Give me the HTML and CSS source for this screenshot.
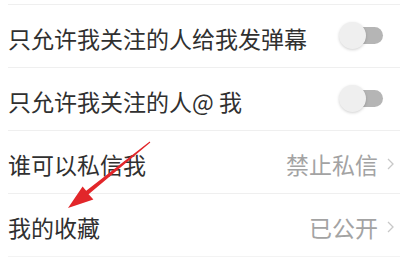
FILE: index.html
```html
<!DOCTYPE html>
<html lang="zh-CN">
<head>
<meta charset="utf-8">
<link rel="stylesheet" href="styles.css">
</head>
<body>
<div class="list">
  <div class="row">
    <span class="label">只允许我关注的人给我发弹幕</span>
    <div class="switch"><div class="knob"></div></div>
  </div>
  <div class="row">
    <span class="label">只允许我关注的人@ 我</span>
    <div class="switch"><div class="knob"></div></div>
  </div>
  <div class="row link">
    <span class="label">谁可以私信我</span>
    <span class="value">禁止私信</span>
    <svg class="chev" width="7" height="12" viewBox="0 0 7 12"><path d="M1 1 L6 6 L1 11" fill="none" stroke="#c8c8c8" stroke-width="1.3"/></svg>
  </div>
  <div class="row link">
    <span class="label">我的收藏</span>
    <span class="value">已公开</span>
    <svg class="chev" width="7" height="12" viewBox="0 0 7 12"><path d="M1 1 L6 6 L1 11" fill="none" stroke="#c8c8c8" stroke-width="1.3"/></svg>
  </div>
</div>
<svg class="arrow" width="400" height="259" viewBox="0 0 400 259">
  <polygon points="149.7,141.6 86.2,190.8 82.6,186.5 68,208 93.4,199.5 88.6,194.2 150.3,142.4" fill="#e2262a"/>
</svg>
</body>
</html>
```
FILE: styles.css
```css
html, body {
  margin: 0;
  padding: 0;
  background: #ffffff;
}
body {
  width: 400px;
  height: 259px;
  overflow: hidden;
  position: relative;
  font-family: "Noto Sans CJK SC", "Noto Sans", sans-serif;
}
.list {
  padding-top: 4px;
}
.row {
  display: flex;
  align-items: center;
  height: 58px;
  padding-top: 4px;
  margin-left: 8px;
  border-top: 1px solid #efefef;
  padding-right: 17px;
}
.row:last-child {
  border-bottom: 1px solid #f3f3f3;
}
.row.link {
  padding-right: 6px;
}
.label {
  flex: 1;
  font-size: 23px;
  color: #303030;
  line-height: 1;
}
.value {
  font-size: 23px;
  color: #a3a3a3;
  line-height: 1;
}
.chev {
  margin-left: 9px;
}
.switch {
  width: 43px;
  height: 17px;
  border-radius: 9px;
  background: #b5b5b5;
  display: flex;
  align-items: center;
  margin-top: -5px;
}
.knob {
  width: 27px;
  height: 27px;
  flex-shrink: 0;
  border-radius: 50%;
  background: #efefef;
  box-shadow: 0 1px 3px rgba(0, 0, 0, 0.18);
  margin-left: -1px;
}
.arrow {
  position: absolute;
  left: 0;
  top: 0;
  pointer-events: none;
}
```
